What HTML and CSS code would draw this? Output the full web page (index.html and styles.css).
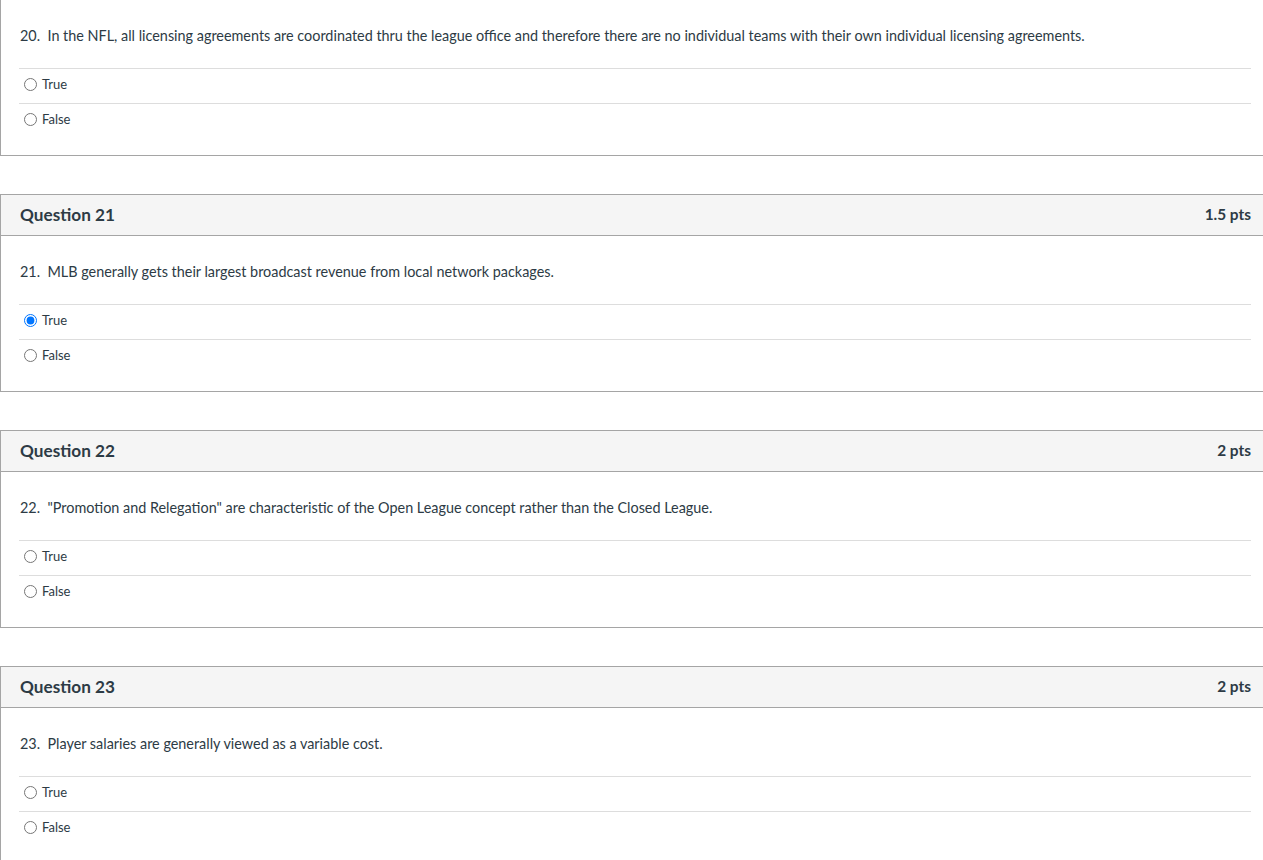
FILE: index.html
```html
<!DOCTYPE html>
<html lang="en">
<head>
<meta charset="utf-8">
<title>Quiz</title>
<link rel="stylesheet" href="styles.css">
</head>
<body>
<div class="quiz">
  <div class="card card--cut">
    <div class="card-body">
      <div class="q-text">20.&nbsp; In the NFL, all licensing agreements are coordinated thru the league office and therefore there are no individual teams with their own individual licensing agreements.</div>
      <div class="answers">
        <label class="answer"><input type="radio" name="q20"><span>True</span></label>
        <label class="answer"><input type="radio" name="q20"><span>False</span></label>
      </div>
    </div>
  </div>

  <div class="card">
    <div class="card-header"><span class="q-name">Question 21</span><span class="q-pts">1.5 pts</span></div>
    <div class="card-body">
      <div class="q-text">21.&nbsp; MLB generally gets their largest broadcast revenue from local network packages.</div>
      <div class="answers">
        <label class="answer"><input type="radio" name="q21" checked><span>True</span></label>
        <label class="answer"><input type="radio" name="q21"><span>False</span></label>
      </div>
    </div>
  </div>

  <div class="card">
    <div class="card-header"><span class="q-name">Question 22</span><span class="q-pts">2 pts</span></div>
    <div class="card-body">
      <div class="q-text">22.&nbsp; "Promotion and Relegation" are characteristic of the Open League concept rather than the Closed League.</div>
      <div class="answers">
        <label class="answer"><input type="radio" name="q22"><span>True</span></label>
        <label class="answer"><input type="radio" name="q22"><span>False</span></label>
      </div>
    </div>
  </div>

  <div class="card">
    <div class="card-header"><span class="q-name">Question 23</span><span class="q-pts">2 pts</span></div>
    <div class="card-body">
      <div class="q-text">23.&nbsp; Player salaries are generally viewed as a variable cost.</div>
      <div class="answers">
        <label class="answer"><input type="radio" name="q23"><span>True</span></label>
        <label class="answer"><input type="radio" name="q23"><span>False</span></label>
      </div>
    </div>
  </div>
</div>
</body>
</html>
```

FILE: styles.css
```css
html, body {
  margin: 0;
  padding: 0;
  background: #ffffff;
}
body {
  font-family: Lato, "Open Sans", "Liberation Sans", sans-serif;
  color: #2d3b45;
  overflow: hidden;
}
.quiz {
  display: flex;
  flex-direction: column;
  gap: 38px;
}
.card {
  width: calc(100% + 1px);
  box-sizing: border-box;
  border: 1px solid #a5a5a5;
  background: #fff;
}
.card--cut {
  border-top: none;
}
.card-header {
  box-sizing: border-box;
  height: 41px;
  background: #f5f5f5;
  border-bottom: 1px solid #a5a5a5;
  display: flex;
  align-items: center;
  justify-content: space-between;
  padding: 0 12px 2px 19px;
  font-weight: 700;
  font-size: 17.2px;
}
.q-pts {
  font-size: 15.4px;
}
.card-body {
  padding: 26px 12px 17px 18px;
}
.q-text {
  font-size: 14.4px;
  line-height: 20px;
  padding-left: 1px;
  margin-bottom: 22px;
}
.answers {
  display: flex;
  flex-direction: column;
}
.answer {
  display: flex;
  align-items: center;
  height: 35px;
  box-sizing: border-box;
  padding-bottom: 4px;
  border-top: 1px solid #dddddd;
  font-size: 13px;
}
.answer input {
  margin: 0 5px 0 5px;
  width: 13px;
  height: 13px;
}
```
